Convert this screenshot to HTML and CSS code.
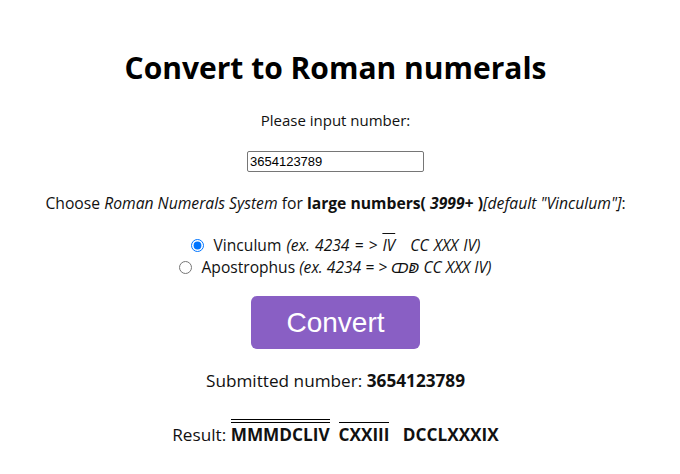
FILE: index.html
```html
<!DOCTYPE html>
<html lang="en">
<head>
<meta charset="utf-8">
<title>Convert to Roman numerals</title>
<link rel="stylesheet" href="styles.css">
</head>
<body>
<main class="page">
  <h1 class="title">Convert to Roman numerals</h1>
  <p class="label">Please input number:</p>
  <input class="num-input" type="text" value="3654123789">
  <p class="choose">Choose <i>Roman Numerals System</i> for <b>large numbers( <i>3999+</i> )</b><i>[default "Vinculum"]</i>:</p>
  <div class="options">
    <label class="opt opt-vinculum"><input type="radio" name="sys" checked> Vinculum <i>(ex. 4234 = &gt; <span class="ov-thin">IV</span>&nbsp;&nbsp; CC XXX IV)</i></label>
    <label class="opt"><input type="radio" name="sys"> Apostrophus <i>(ex. 4234 = &gt; <span class="apo">ↀↁ</span> CC XXX IV)</i></label>
  </div>
  <button class="convert" type="button">Convert</button>
  <p class="submitted">Submitted number: <b>3654123789</b></p>
  <p class="result">Result: <b><span class="ov-double">MMMDCLIV</span>&nbsp; <span class="ov-single">CXXIII</span>&nbsp;&nbsp; DCCLXXXIX</b></p>
</main>
</body>
</html>
```
FILE: styles.css
```css
html, body {
  margin: 0;
  padding: 0;
  background: #ffffff;
}
body {
  font-family: "Open Sans", "Noto Sans", sans-serif;
  font-size: 15px;
  color: #111;
}
.page {
  display: flex;
  flex-direction: column;
  align-items: center;
  padding: 48px 9px 0 0;
}
.title {
  margin: 0;
  font-size: 30px;
  font-weight: 700;
  color: #000;
  line-height: 40px;
}
.label {
  margin: 22px 0 0;
  line-height: 20px;
}
.num-input {
  box-sizing: border-box;
  margin-top: 21px;
  width: 177px;
  height: 21px;
  padding: 1px 2px;
  border: 1px solid #767676;
  border-radius: 2px;
  font-family: "Liberation Sans", Arial, sans-serif;
  font-size: 13px;
  color: #000;
}
.choose {
  margin: 21px 0 0;
  font-size: 15.7px;
  line-height: 20px;
}
.options {
  margin-top: 21px;
  display: flex;
  flex-direction: column;
  align-items: center;
  font-size: 15.6px;
}
.opt {
  line-height: 22px;
}
.opt-vinculum {
  word-spacing: 1px;
}
.opt input {
  margin: 0 5px 0 0;
  width: 13px;
  height: 13px;
  vertical-align: -1px;
}
.ov-thin {
  text-decoration: overline;
}
.apo {
  font-family: "DejaVu Sans", sans-serif;
  font-size: 14px;
}
.convert {
  margin-top: 17px;
  width: 169px;
  height: 53px;
  border: none;
  border-radius: 6px;
  background: #895fc4;
  color: #fff;
  font-family: "Liberation Sans", Arial, sans-serif;
  font-size: 28px;
}
.submitted {
  margin: 20px 0 0;
  font-size: 17.2px;
  line-height: 24px;
}
.result {
  margin: 30px 0 0;
  font-size: 17.2px;
  line-height: 24px;
}
.ov-double {
  border-top: 4px double #000;
}
.ov-single {
  border-top: 1.5px solid #000;
}
```
